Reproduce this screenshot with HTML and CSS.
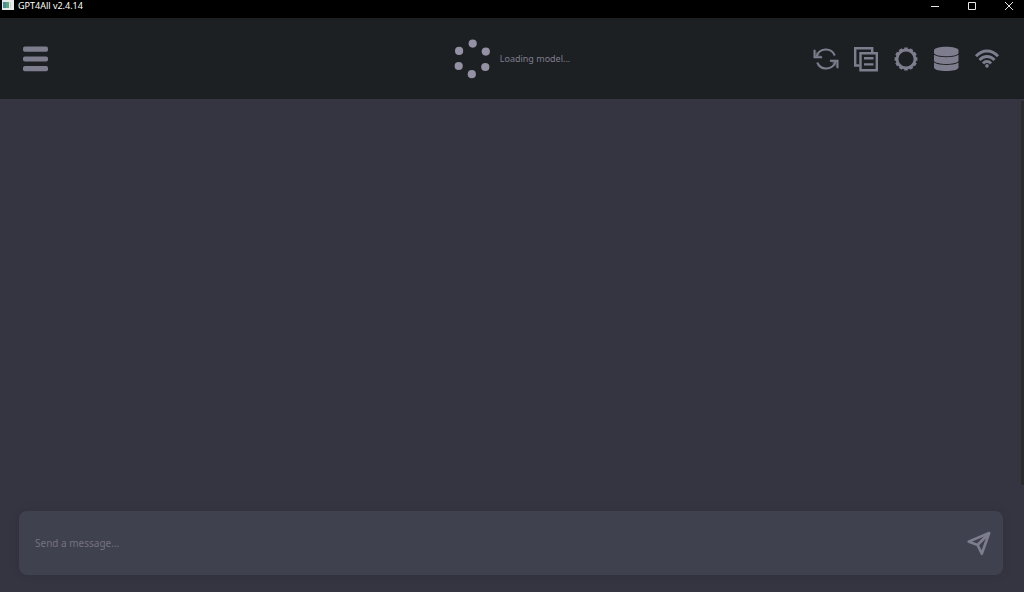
FILE: index.html
```html
<!DOCTYPE html>
<html lang="en">
<head>
<meta charset="utf-8">
<meta name="viewport" content="width=device-width, initial-scale=1">
<title>GPT4All v2.4.14</title>
<link rel="stylesheet" href="styles.css">
</head>
<body>
<div class="window">
  <div class="titlebar">
    <svg class="app-icon" viewBox="0 0 12 10" aria-hidden="true">
      <rect width="12" height="10" fill="#e4ebe8"/>
      <rect x="1" y="2" width="6" height="6" fill="#4f8c94"/>
      <rect x="4" y="2" width="3" height="6" fill="#5fa583"/>
      <rect x="8" y="2" width="1" height="6" fill="#c3d3cd"/>
    </svg>
    <span class="window-title">GPT4All v2.4.14</span>
    <div class="window-controls">
      <button class="window-button" type="button" aria-label="Minimize">
        <svg viewBox="0 0 10 10"><path d="M1 5.5h8"/></svg>
      </button>
      <button class="window-button" type="button" aria-label="Maximize">
        <svg viewBox="0 0 10 10"><path d="M1.500 1.500h7v7h-7z"/></svg>
      </button>
      <button class="window-button" type="button" aria-label="Close">
        <svg viewBox="0 0 10 10"><path d="M1 1l8 8M9 1l-8 8"/></svg>
      </button>
    </div>
  </div>

  <header class="header">
    <button class="icon-button menu-button" type="button" aria-label="Menu">
      <svg viewBox="0 0 28 28" fill="currentColor">
        <rect x="1" y="1.6" width="25" height="5.2" rx="1.8"/>
        <rect x="1" y="11.4" width="25" height="5.2" rx="1.8"/>
        <rect x="1" y="21.1" width="25" height="5.2" rx="1.8"/>
      </svg>
    </button>

    <div class="status" role="status">
      <svg class="spinner" viewBox="0 0 40 40" aria-hidden="true">
        <circle cx="20.7" cy="4.6" r="4.1"/>
        <circle cx="33.8" cy="12.6" r="4.1"/>
        <circle cx="33.3" cy="28" r="4.1"/>
        <circle cx="19.8" cy="35.2" r="4.1"/>
        <circle cx="6.7" cy="27" r="4.1"/>
        <circle cx="7.1" cy="11.9" r="4.1"/>
      </svg>
      <span>Loading model...</span>
    </div>

    <div class="actions">
      <button class="icon-button" type="button" aria-label="Reset conversation">
        <svg viewBox="0 0 28 28" fill="none" stroke="currentColor" stroke-width="2">
          <path d="M4.500 11.500A9.700 9.700 0 0 1 22.800 10.500M23.500 16.500A9.700 9.700 0 0 1 5.200 17.500"/>
          <path d="M2.500 4.800v7.400h7.600zM25.500 23.200v-7.400h-7.600z" fill="currentColor" stroke="none" opacity=".35"/>
          <path d="M2.500 4.800v7.400h7.600M25.500 23.200v-7.400h-7.600"/>
        </svg>
      </button>
      <button class="icon-button" type="button" aria-label="Copy conversation">
        <svg viewBox="0 0 28 28" fill="none" stroke="currentColor" stroke-width="2.4">
          <path d="M7.500 20.500H3.200V3.200h17v4"/>
          <path d="M8.500 8.200h16.300v17H8.500z"/>
          <path d="M12 13.200h9.500M12 19.400h9.500"/>
        </svg>
      </button>
      <button class="icon-button" type="button" aria-label="Settings">
        <svg viewBox="0 0 28 28" fill="none" stroke="currentColor">
          <circle cx="14" cy="14" r="9" stroke-width="2.800"/>
          <g stroke-width="3.600">
            <path d="M14 2.600v3M14 22.400v3M2.600 14h3M22.400 14h3"/>
            <path d="M14 2.600v3M14 22.400v3M2.600 14h3M22.400 14h3" transform="rotate(30 14 14)"/>
            <path d="M14 2.600v3M14 22.400v3M2.600 14h3M22.400 14h3" transform="rotate(60 14 14)"/>
          </g>
        </svg>
      </button>
      <button class="icon-button" type="button" aria-label="Downloads">
        <svg viewBox="0 0 28 28" fill="currentColor">
          <path d="M2 5.500C2 3 8 1.800 14.300 1.800S26.500 3 26.500 5.500V8C26.500 10 20 11.300 14.300 11.300S2 10 2 8z"/>
          <path d="M2 9.800C5 11.800 10 12.200 14.300 12.200S23.500 11.800 26.500 9.800V15.800C26.500 17.800 20 19 14.300 19S2 17.800 2 15.800z"/>
          <path d="M2 17.600C5 19.600 10 19.900 14.300 19.900S23.500 19.600 26.500 17.600V22.500C26.500 25 20 26 14.300 26S2 25 2 22.500z"/>
        </svg>
      </button>
      <button class="icon-button" type="button" aria-label="Network">
        <svg viewBox="0 0 28 28" fill="none" stroke="currentColor" stroke-width="2.900">
          <path d="M4 11.200C10.300 4.200 19.700 4.200 26 11.200"/>
          <path d="M7.500 14.900C11.700 10.300 18.300 10.300 22.500 14.900"/>
          <path d="M11 18.500C13.200 15.900 16.800 15.900 19 18.500"/>
          <circle cx="15" cy="20.900" r="1.800" fill="currentColor" stroke="none"/>
        </svg>
      </button>
    </div>
  </header>

  <main class="conversation"></main>

  <form class="composer">
    <input class="message-input" type="text" placeholder="Send a message..." aria-label="Message">
    <button class="icon-button send-button" type="button" aria-label="Send">
      <svg viewBox="0 0 28 28" fill="none" stroke="currentColor" stroke-width="2.600" stroke-linejoin="round">
        <path d="M24.200 4L3.600 12.600L12.600 16L16.800 24.800z"/>
        <path d="M24.200 4L12.600 16"/>
      </svg>
    </button>
  </form>
</div>
</body>
</html>
```
FILE: styles.css
```css
* {
  box-sizing: border-box;
}

body {
  margin: 0;
  background: #343541;
  color: #7d7d8e;
  font-family: "Noto Sans", "Open Sans", sans-serif;
  font-size: 9px;
}

button {
  padding: 0;
  border: 0;
  background: none;
  color: inherit;
}

svg {
  display: block;
}

.window {
  display: flex;
  flex-direction: column;
  min-height: 100vh;
}

.titlebar {
  display: flex;
  align-items: flex-start;
  height: 18px;
  padding-left: 2px;
  background: #000;
  color: #fff;
}

.app-icon {
  width: 12px;
  height: 10px;
  margin-right: 4px;
}

.window-title {
  line-height: 12px;
}

.window-controls {
  display: flex;
  gap: 7px;
  margin-left: auto;
}

.window-button {
  display: grid;
  place-items: center;
  width: 30px;
  height: 12px;
}

.window-button svg {
  width: 10px;
  height: 10px;
  fill: none;
  stroke: #e6e6e6;
}

.header {
  display: grid;
  grid-template-columns: 1fr auto 1fr;
  align-items: center;
  height: 81px;
  padding: 0 24px 0 22px;
  background: #1d2023;
}

.icon-button {
  width: 28px;
  height: 28px;
}

.icon-button svg {
  width: 28px;
  height: 28px;
}

.status {
  display: flex;
  align-items: center;
  gap: 8px;
}

.spinner {
  width: 40px;
  height: 40px;
  fill: #9491a5;
}

.actions {
  display: flex;
  justify-content: flex-end;
  gap: 12px;
}

.conversation {
  flex: 1;
  margin: 2px 0 26px;
  border-right: 3px solid #2a2a2e;
}

.composer {
  display: flex;
  align-items: center;
  height: 64px;
  margin: 0 21px 17px 19px;
  padding: 0 10px 0 16px;
  border-radius: 8px;
  background: #40414f;
  box-shadow: 0 0 12px rgba(0, 0, 0, 0.08);
}

.message-input {
  flex: 1;
  min-width: 0;
  height: 100%;
  padding: 0;
  border: 0;
  outline: 0;
  background: none;
  color: #d1d1dc;
  font-family: inherit;
  font-size: 10px;
}

.message-input::placeholder {
  color: #73727f;
  opacity: 1;
}
```
